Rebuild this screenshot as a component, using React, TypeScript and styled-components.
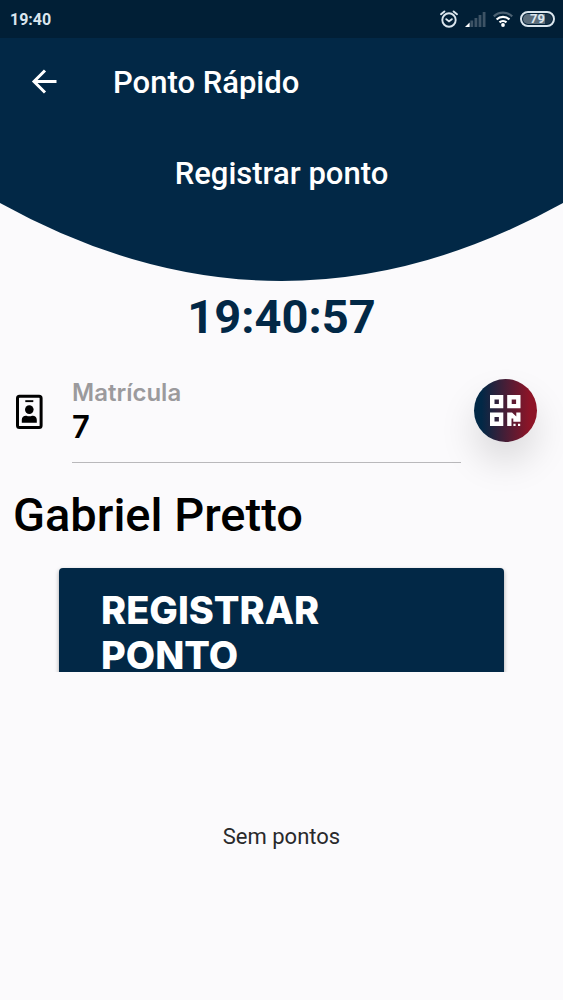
import React from "react";
import styled, { createGlobalStyle } from "styled-components";

const navy = "#022846";

const GlobalStyle = createGlobalStyle`
  *, *::before, *::after { box-sizing: border-box; }
  body {
    margin: 0;
    background: #fbfafc;
    color: #000;
    font-family: Roboto, "Noto Sans", sans-serif;
  }
`;

const Screen = styled.div`
  min-height: 100vh;
  display: flex;
  flex-direction: column;
`;

const StatusBar = styled.div`
  height: 38px;
  padding: 0 8px 0 10px;
  display: flex;
  align-items: center;
  justify-content: space-between;
  background: #011f36;
  color: #dbe6ee;
  font-size: 16px;
  font-weight: 700;
`;

const StatusIcons = styled.div`
  display: flex;
  align-items: center;
  gap: 7px;
`;

const Battery = styled.span`
  width: 35px;
  height: 16px;
  display: flex;
  align-items: center;
  justify-content: center;
  border: 2px solid #dbe6ee;
  border-radius: 8px;
  background: linear-gradient(90deg, #5b6d7b 75%, #1c3549 75%) content-box;
  padding: 1px;
  font-size: 13px;
  line-height: 12px;
`;

const AppBar = styled.header`
  height: 92px;
  padding: 0 24px 4px;
  display: flex;
  align-items: center;
  gap: 49px;
  background: ${navy};
  color: #fff;
`;

const BackButton = styled.button`
  width: 40px;
  height: 40px;
  padding: 0;
  display: flex;
  align-items: center;
  justify-content: center;
  border: 0;
  background: none;
  color: inherit;
  cursor: pointer;
`;

const Title = styled.h1`
  margin: 0;
  padding-top: 2px;
  font-size: 31px;
  line-height: 36px;
  font-weight: 500;
`;

const Hero = styled.section`
  color: ${navy};
`;

const HeroTitle = styled.h2`
  height: 73px;
  margin: 0;
  padding-top: 26px;
  background: ${navy};
  color: #fff;
  font-size: 31px;
  line-height: 36px;
  font-weight: 500;
  text-align: center;
`;

const Curve = styled.svg`
  display: block;
  width: 100%;
  height: 78px;
`;

const Clock = styled.time`
  display: block;
  padding-top: 8px;
  color: ${navy};
  font-size: 47px;
  line-height: 56px;
  font-weight: 700;
  text-align: center;
`;

const FieldRow = styled.div`
  margin-top: 32px;
  padding: 0 26px 0 12px;
  display: flex;
  align-items: flex-start;
`;

const BadgeIcon = styled.svg`
  flex: none;
  width: 35px;
  height: 35px;
  margin: 17px 25px 0 0;
`;

const Field = styled.div`
  flex: 1;
  min-width: 0;
  display: flex;
  flex-direction: column;
  border-bottom: 1px solid #b9b8bb;
`;

const FieldLabel = styled.label`
  padding-top: 2px;
  color: #9b9a9d;
  font-family: Inter, sans-serif;
  font-size: 24px;
  line-height: 28px;
  font-weight: 600;
`;

const FieldInput = styled.input`
  width: 100%;
  height: 55px;
  padding: 0 0 16px;
  border: 0;
  outline: 0;
  background: none;
  color: #000;
  font-family: Inter, sans-serif;
  font-size: 31px;
  font-weight: 600;
`;

const QrButton = styled.button`
  flex: none;
  width: 63px;
  height: 63px;
  margin: 2px 0 0 13px;
  padding: 0;
  display: flex;
  align-items: center;
  justify-content: center;
  border: 0;
  border-radius: 50%;
  background: linear-gradient(90deg, #022846 12%, #8d1427 88%);
  box-shadow: 0 20px 36px rgba(0, 0, 0, 0.13);
  cursor: pointer;
`;

const PersonName = styled.p`
  margin: 24px 13px 0;
  font-size: 47px;
  line-height: 56px;
  font-weight: 500;
`;

const ButtonClip = styled.div`
  height: 107px;
  margin-top: 22px;
  padding: 3px 59px 0;
  overflow: hidden;
`;

const RegisterButton = styled.button`
  width: 100%;
  height: 134px;
  padding: 0 42px 4px;
  border: 0;
  border-radius: 4px;
  background: ${navy};
  box-shadow: 0 2px 4px rgba(0, 0, 0, 0.35);
  color: #fff;
  font-family: Inter, sans-serif;
  font-size: 38px;
  line-height: 45px;
  font-weight: 800;
  text-align: left;
  text-transform: uppercase;
  cursor: pointer;
`;

const Empty = styled.p`
  margin: 152px 0 0;
  color: #29292b;
  font-size: 22px;
  line-height: 26px;
  text-align: center;
`;

const AlarmIcon = () => (
  <svg width="18" height="18" viewBox="0 0 18 18" fill="none" stroke="#dbe6ee" strokeWidth="1.9" strokeLinecap="round" aria-hidden="true">
    <circle cx="9" cy="10" r="6.7" />
    <path d="M6.3 9.2 9 11.4l2.8-2.2M1 4.2 4.4 1.4M17 4.2l-3.4-2.8" />
  </svg>
);

const SignalIcon = () => (
  <svg width="21" height="16" viewBox="0 0 21 16" aria-hidden="true">
    <path d="M0 16 4.6 11.5V16Z" fill="#fff" />
    <path d="M5.4 9.5h2.8V16H5.4zM9.5 7h2.8v9H9.5zM13.6 4h2.8v12h-2.8zM17.7 1h2.8v15h-2.8z" fill="#3d5365" />
  </svg>
);

const WifiIcon = () => (
  <svg width="20" height="16" viewBox="0 0 20 16" fill="none" strokeWidth="2.2" aria-hidden="true">
    <path d="M.8 5.4a13.2 13.2 0 0 1 18.4 0" stroke="#4c6172" />
    <path d="M3.6 8.5a9.2 9.2 0 0 1 12.8 0M6.5 11.4a5.2 5.2 0 0 1 7 0" stroke="#fff" />
    <circle cx="10" cy="14" r="1.9" fill="#fff" />
  </svg>
);

export default function App() {
  return (
    <>
      <GlobalStyle />
      <Screen>
        <StatusBar>
          <span>19:40</span>
          <StatusIcons>
            <AlarmIcon />
            <SignalIcon />
            <WifiIcon />
            <Battery>79</Battery>
          </StatusIcons>
        </StatusBar>
        <AppBar>
          <BackButton type="button" aria-label="Voltar">
            <svg width="26" height="26" viewBox="0 0 26 26" fill="none" stroke="#fff" strokeWidth="3" aria-hidden="true">
              <path d="M25.5 12.5H3M14 1.5 3 12.5 14 23.5" />
            </svg>
          </BackButton>
          <Title>Ponto Rápido</Title>
        </AppBar>
        <main>
          <Hero>
            <HeroTitle>Registrar ponto</HeroTitle>
            <Curve viewBox="0 0 563 78" preserveAspectRatio="none" aria-hidden="true">
              <path d="M0 0Q281.5 156 563 0Z" fill="currentColor" />
            </Curve>
          </Hero>
          <Clock>19:40:57</Clock>
          <FieldRow>
            <BadgeIcon viewBox="0 0 35 35" aria-hidden="true">
              <rect x="5.5" y="2.2" width="23.6" height="31.2" rx="2" fill="none" stroke="#000" strokeWidth="3" />
              <path d="M13.3 6.2h8v1.9h-8z" />
              <circle cx="17.3" cy="15.6" r="4.3" />
              <path d="M9.8 28.7v-3c0-3 2.6-4.3 4.7-3.9 1.6.7 4 .7 5.6 0 2.1-.4 4.7.9 4.7 3.9v3Z" />
            </BadgeIcon>
            <Field>
              <FieldLabel htmlFor="matricula">Matrícula</FieldLabel>
              <FieldInput id="matricula" type="text" inputMode="numeric" defaultValue="7" />
            </Field>
            <QrButton type="button" aria-label="Ler código QR">
              <svg width="31" height="31" viewBox="0 0 31 31" fill="#fff" aria-hidden="true">
                <path fillRule="evenodd" d="M0 0h13.3v13.3H0zM4.5 4.5v4.4h4.4V4.5zM17.2 0h13.3v13.3H17.2zM21.7 4.5v4.4h4.4V4.5zM0 17.6h13.3v13.3H0zM4.5 22v4.4h4.4V22z" />
                <path d="M17.2 17.6h4.8l4.3 3.8v-3.8h4.2v9.2h-7.2v-3.2h-1.8v7.3h-4.3zM23.4 28.7h2.2v2.2h-2.2zM28 28.7h2.2v2.2H28z" />
              </svg>
            </QrButton>
          </FieldRow>
          <PersonName>Gabriel Pretto</PersonName>
          <ButtonClip>
            <RegisterButton type="button">Registrar<br />ponto</RegisterButton>
          </ButtonClip>
          <Empty>Sem pontos</Empty>
        </main>
      </Screen>
    </>
  );
}
